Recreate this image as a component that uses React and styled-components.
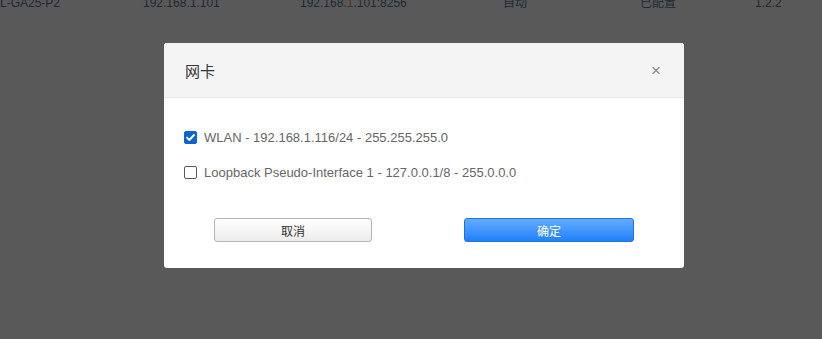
import React from 'react';
import styled, { createGlobalStyle } from 'styled-components';

const GlobalStyle = createGlobalStyle`
  html, body {
    margin: 0;
    padding: 0;
    background: #595959;
    font-family: "Liberation Sans", Arial, "Noto Sans CJK SC", sans-serif;
  }
`

const Page = styled.div`
  width: 822px;
  height: 339px;
  background: #595959;
  overflow: hidden;
`

const BgRow = styled.div`
  display: grid;
  grid-template-columns: 143px 157px 203px 137px 115px 1fr;
  margin-top: -5px;
  height: 16px;
  line-height: 16px;
  font-size: 12px;
  color: #1e2833;
`

const Hl = styled.span`
  color: #4a3318;
`

const Dialog = styled.div`
  position: fixed;
  left: 164px;
  top: 43px;
  width: 520px;
  background: #fff;
  border-radius: 3px;
  overflow: hidden;
`

const Header = styled.div`
  display: flex;
  align-items: center;
  justify-content: space-between;
  height: 54px;
  padding: 0 23px 0 21px;
  background: #f4f4f4;
  border-bottom: 1px solid #e6e6e6;
`

const Title = styled.div`
  font-size: 15px;
  color: #333;
`

const Close = styled.div`
  font-size: 17px;
  color: #8a8a8a;
  line-height: 1;
  cursor: pointer;
`

const Body = styled.div`
  padding: 22px 20px 0 20px;
`

const Option = styled.label`
  display: flex;
  align-items: center;
  height: 35px;
  font-size: 13px;
  color: #666;
`

const Box = styled.span`
  display: inline-flex;
  align-items: center;
  justify-content: center;
  box-sizing: border-box;
  width: 13px;
  height: 13px;
  margin-right: 7px;
  border-radius: 2px;
  border: 1px solid ${p => (p.$checked ? '#0b63d0' : '#5a5a5a')};
  background: ${p => (p.$checked ? '#0b63d0' : '#fff')};
`

const Footer = styled.div`
  display: flex;
  justify-content: space-between;
  padding: 28px 50px 26px 50px;
`

const Button = styled.button`
  box-sizing: border-box;
  width: ${p => (p.$primary ? '170px' : '158px')};
  height: 24px;
  border-radius: 3px;
  font-family: inherit;
  font-size: 12px;
  cursor: pointer;
  border: 1px solid ${p => (p.$primary ? '#1b73e4' : '#b4b4b4')};
  color: ${p => (p.$primary ? '#fff' : '#333')};
  background: ${p =>
    p.$primary
      ? 'linear-gradient(to bottom, #63acff, #2181f7)'
      : 'linear-gradient(to bottom, #ffffff, #ececec)'};
`

const Check = () => (
  <svg width="11" height="11" viewBox="0 0 11 11">
    <path d="M2 5.6 L4.4 8 L9 3" fill="none" stroke="#fff" strokeWidth="1.9" strokeLinecap="round" strokeLinejoin="round" />
  </svg>
)

const options = [
  { text: 'WLAN - 192.168.1.116/24 - 255.255.255.0', checked: true },
  { text: 'Loopback Pseudo-Interface 1 - 127.0.0.1/8 - 255.0.0.0', checked: false },
]

const App = () => {
  return (
    <>
      <GlobalStyle />
      <Page>
        <BgRow>
          <span>L-GA25-P2</span>
          <span>192.168.1.101</span>
          <span>192.168.<Hl>1</Hl>.101:8256</span>
          <span>自动</span>
          <span>已配置</span>
          <span>1.2.2</span>
        </BgRow>
      </Page>
      <Dialog>
        <Header>
          <Title>网卡</Title>
          <Close>×</Close>
        </Header>
        <Body>
          {options.map((o, i) => (
            <Option key={i}>
              <Box $checked={o.checked}>{o.checked && <Check />}</Box>
              {o.text}
            </Option>
          ))}
        </Body>
        <Footer>
          <Button>取消</Button>
          <Button $primary>确定</Button>
        </Footer>
      </Dialog>
    </>
  );
};

export default App;
